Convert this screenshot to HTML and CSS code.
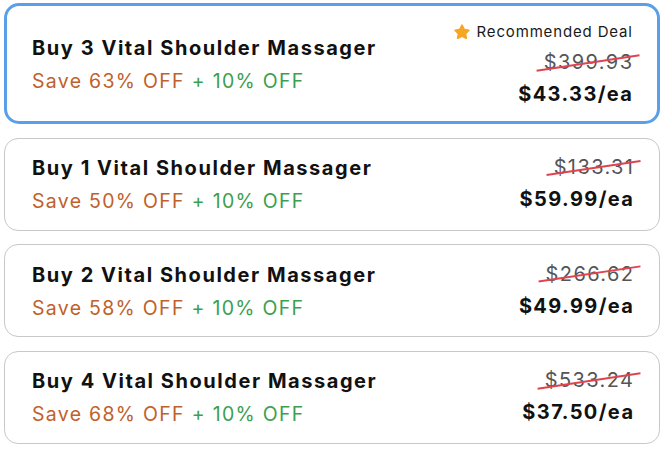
FILE: index.html
```html
<!DOCTYPE html>
<html>
<head>
<meta charset="utf-8">
<link rel="stylesheet" href="styles.css">
</head>
<body>
<div class="list">
  <div class="card active">
    <div class="info">
      <div class="title">Buy 3 Vital Shoulder Massager</div>
      <div class="save"><span class="orange">Save 63% OFF</span> <span class="green">+ 10% OFF</span></div>
    </div>
    <div class="prices">
      <div class="badge"><svg class="star" viewBox="0 0 24 24"><path d="M12 1.8c.5 0 .9.3 1.1.7l2.5 5.2 5.6.8c1 .2 1.4 1.3.7 2l-4.1 4 1 5.6c.2 1-.9 1.7-1.8 1.2L12 18.7l-5 2.6c-.9.5-2-.2-1.8-1.2l1-5.6-4.1-4c-.7-.7-.3-1.8.7-2l5.6-.8 2.5-5.2c.2-.4.6-.7 1.1-.7z"/></svg><span class="badge-text">Recommended Deal</span></div>
      <div class="old"><span class="strike">$399.93</span></div>
      <div class="price">$43.33/ea</div>
    </div>
  </div>
  <div class="card">
    <div class="info">
      <div class="title">Buy 1 Vital Shoulder Massager</div>
      <div class="save"><span class="orange">Save 50% OFF</span> <span class="green">+ 10% OFF</span></div>
    </div>
    <div class="prices">
      <div class="old"><span class="strike">$133.31</span></div>
      <div class="price">$59.99/ea</div>
    </div>
  </div>
  <div class="card">
    <div class="info">
      <div class="title">Buy 2 Vital Shoulder Massager</div>
      <div class="save"><span class="orange">Save 58% OFF</span> <span class="green">+ 10% OFF</span></div>
    </div>
    <div class="prices">
      <div class="old"><span class="strike">$266.62</span></div>
      <div class="price">$49.99/ea</div>
    </div>
  </div>
  <div class="card">
    <div class="info">
      <div class="title">Buy 4 Vital Shoulder Massager</div>
      <div class="save"><span class="orange">Save 68% OFF</span> <span class="green">+ 10% OFF</span></div>
    </div>
    <div class="prices">
      <div class="old"><span class="strike">$533.24</span></div>
      <div class="price">$37.50/ea</div>
    </div>
  </div>
</div>
</body>
</html>
```
FILE: styles.css
```css
html, body {
  margin: 0;
  padding: 0;
  background: #ffffff;
}
body {
  font-family: Inter, "Noto Sans", "Liberation Sans", sans-serif;
  color: #111111;
}
.list {
  display: flex;
  flex-direction: column;
  gap: 13.5px;
  padding: 3px 4px 0 4px;
}
.card {
  box-sizing: border-box;
  display: flex;
  justify-content: space-between;
  align-items: center;
  height: 93px;
  padding: 0 26px 0 27px;
  border: 1.5px solid #c8c8c8;
  border-radius: 14px;
  background: #fff;
}
.card.active {
  height: 121px;
  border: 3px solid #5a9fe9;
  border-radius: 15px;
  padding: 0 25px 0 25px;
}
.info {
  display: flex;
  flex-direction: column;
  gap: 1px;
  padding-top: 1px;
}
.title {
  font-size: 20px;
  font-weight: 700;
  line-height: 32px;
  letter-spacing: 1.55px;
  color: #111;
}
.save {
  font-size: 19.5px;
  line-height: 32px;
  letter-spacing: 1.3px;
}
.orange { color: #c0612b; }
.green { color: #3c9f4f; }
.prices {
  display: flex;
  flex-direction: column;
  align-items: flex-end;
}
.badge {
  display: flex;
  align-items: center;
  gap: 6px;
  font-size: 15px;
  line-height: 31px;
  color: #1a1a1a;
}
.badge-text {
  letter-spacing: 0.85px;
  margin-right: -0.85px;
}
.star {
  width: 18px;
  height: 18px;
  fill: #f6a623;
}
.old {
  font-size: 20px;
  line-height: 31px;
  color: #555555;
  letter-spacing: 1.4px;
  margin-right: -1.4px;
}
.strike {
  position: relative;
  display: inline-block;
}
.strike::after {
  content: "";
  position: absolute;
  left: -8px;
  right: -6px;
  top: 48%;
  height: 1.5px;
  background: #e0434f;
  transform: rotate(-8.5deg);
}
.price {
  font-size: 20px;
  font-weight: 700;
  line-height: 33px;
  color: #111;
  letter-spacing: 1.4px;
  margin-right: -1.4px;
}
```
